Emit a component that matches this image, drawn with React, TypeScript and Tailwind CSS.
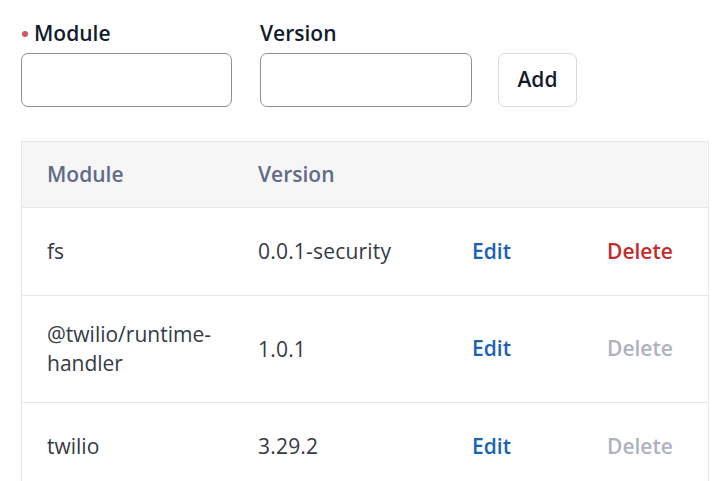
const rows = [
  { name: '@twilio/runtime-handler', version: '1.0.1', canDelete: false },
];

type Dep = { name: string; version: string; canDelete: boolean };

const deps: Dep[] = [
  { name: 'fs', version: '0.0.1-security', canDelete: true },
  ...rows,
  { name: 'twilio', version: '3.29.2', canDelete: false },
];

function Row({ dep }: { dep: Dep }) {
  return (
    <div className="grid grid-cols-[211px_214px_135px_1fr] border-t border-[#e6e7eb] items-center">
      <div className="pl-[25px] pr-4 py-6 leading-[29px] text-[#353a44] break-words">
        {dep.name === '@twilio/runtime-handler' ? (
          <>
            @twilio/runtime-
            <br />
            handler
          </>
        ) : (
          dep.name
        )}
      </div>
      <div className="pl-[25px] py-6 leading-[29px] text-[#353a44] tracking-[0.2px]">{dep.version}</div>
      <div className="pl-[25px] py-6">
        <button className="h-[39px] font-semibold text-[#1a62b4]">Edit</button>
      </div>
      <div className="pl-[25px] py-6">
        <button
          className={
            dep.canDelete
              ? 'h-[39px] font-semibold text-[#c42b2b]'
              : 'h-[39px] font-semibold text-[#aeb2bf]'
          }
        >
          Delete
        </button>
      </div>
    </div>
  );
}

export default function App() {
  return (
    <div className="w-[717px] h-[481px] overflow-hidden bg-white font-['Open_Sans',sans-serif] text-[21px]">
      {/* Add dependency form */}
      <div className="flex items-end pl-[21px] pt-[19px]">
        <div className="flex flex-col w-[211px]">
          <label className="flex items-center h-[29px] font-semibold text-[#121c2d] mb-[5px]">
            <span className="w-[6px] h-[6px] rounded-full bg-[#d6535b] ml-[1px] mr-[6px]" />
            Module
          </label>
          <input className="h-[54px] rounded-[7px] border border-[#8e9099] outline-none px-3" />
        </div>
        <div className="flex flex-col w-[212px] ml-[28px]">
          <label className="h-[29px] leading-[29px] font-semibold text-[#121c2d] mb-[5px]">Version</label>
          <input className="h-[54px] rounded-[7px] border border-[#8e9099] outline-none px-3" />
        </div>
        <button className="ml-[26px] w-[79px] h-[54px] rounded-[7px] border border-[#d8d9de] font-semibold text-[#121c2d]">
          Add
        </button>
      </div>

      {/* Dependencies table */}
      <div className="mt-[34px] ml-[21px] w-[688px] border-x border-t border-[#e6e7eb]">
        <div className="grid grid-cols-[211px_214px_135px_1fr] bg-[#f6f6f7] h-[65px] items-center font-semibold text-[#606b85]">
          <div className="pl-[25px]">Module</div>
          <div className="pl-[25px]">Version</div>
          <div />
          <div />
        </div>
        {deps.map((d) => (
          <Row key={d.name} dep={d} />
        ))}
      </div>
    </div>
  );
}
